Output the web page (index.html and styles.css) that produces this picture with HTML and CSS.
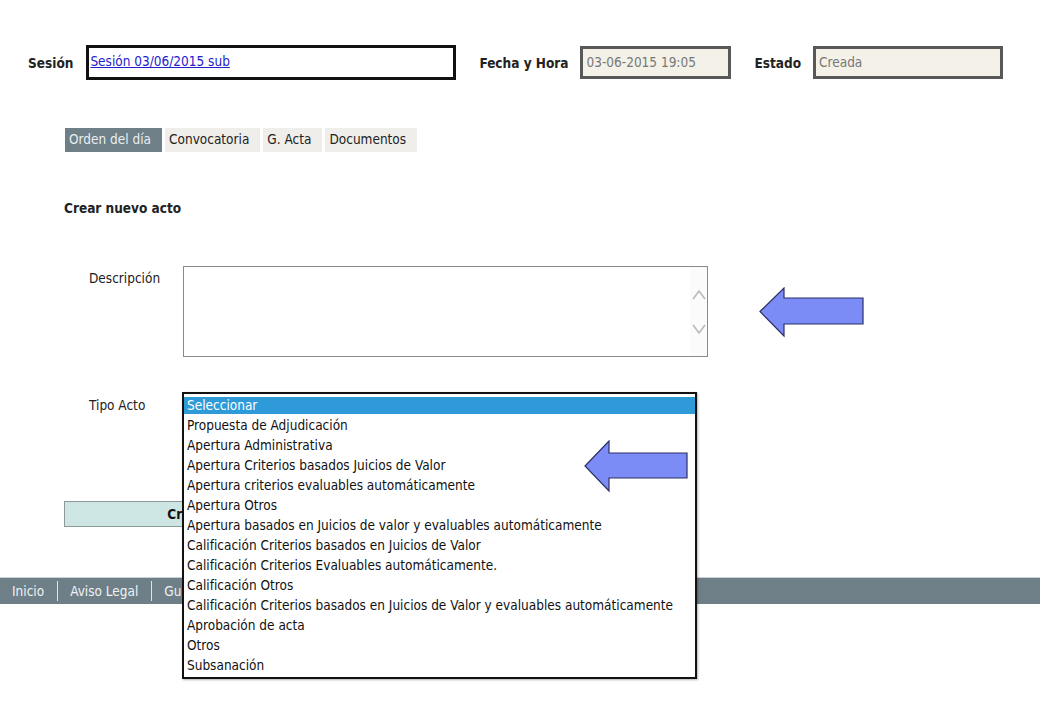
FILE: index.html
```html
<!DOCTYPE html>
<html lang="es">
<head>
    <meta charset="UTF-8">
    <title>Sesión - Orden del día</title>
    <link rel="stylesheet" href="styles.css">
</head>
<body>

    <!-- Cabecera de sesion -->
    <div class="session-row">
        <span class="label">Sesión</span>
        <div class="session-box"><a href="#sesion">Sesión 03/06/2015 sub</a></div>
        <span class="label label-fecha">Fecha y Hora</span>
        <div class="readonly fecha">03-06-2015 19:05</div>
        <span class="label label-estado">Estado</span>
        <div class="readonly estado">Creada</div>
    </div>

    <!-- Pestañas -->
    <div class="tabs">
        <a href="#orden" class="tab active">Orden del día</a>
        <a href="#convocatoria" class="tab">Convocatoria</a>
        <a href="#acta" class="tab">G. Acta</a>
        <a href="#documentos" class="tab">Documentos</a>
    </div>

    <!-- Formulario -->
    <div class="content">
        <h2>Crear nuevo acto</h2>

        <div class="form-row desc-row">
            <span class="field-label">Descripción</span>
            <div class="textarea">
                <div class="scroll">
                    <svg width="14" height="12" viewBox="0 0 14 12"><polyline points="1,10 7,2 13,10" fill="none" stroke="#b9b9b9" stroke-width="1.6"/></svg>
                    <svg width="14" height="12" viewBox="0 0 14 12"><polyline points="1,2 7,10 13,2" fill="none" stroke="#b9b9b9" stroke-width="1.6"/></svg>
                </div>
            </div>
        </div>

        <div class="form-row tipo-row">
            <span class="field-label">Tipo Acto</span>
            <div class="select-wrap">
                <ul class="listbox">
                    <li class="selected">Seleccionar</li>
                    <li>Propuesta de Adjudicación</li>
                    <li>Apertura Administrativa</li>
                    <li>Apertura Criterios basados Juicios de Valor</li>
                    <li>Apertura criterios evaluables automáticamente</li>
                    <li>Apertura Otros</li>
                    <li>Apertura basados en Juicios de valor y evaluables automáticamente</li>
                    <li>Calificación Criterios basados en Juicios de Valor</li>
                    <li>Calificación Criterios Evaluables automáticamente.</li>
                    <li>Calificación Otros</li>
                    <li>Calificación Criterios basados en Juicios de Valor y evaluables automáticamente</li>
                    <li>Aprobación de acta</li>
                    <li>Otros</li>
                    <li>Subsanación</li>
                </ul>
            </div>
        </div>

        <button class="btn-crear">Crear</button>
    </div>

    <!-- Pie -->
    <div class="footer">
        <a href="#inicio">Inicio</a>
        <a href="#aviso">Aviso Legal</a>
        <a href="#guia">Guía</a>
    </div>

    <!-- Flechas de anotacion -->
    <svg class="arrow arrow-desc" width="106" height="51" viewBox="0 0 106 51">
        <polygon points="1,24.5 25,1 25,11 104,11 104,37 25,37 25,49" fill="#7c8cf6" stroke="#2b2f66" stroke-width="1.2"/>
    </svg>
    <svg class="arrow arrow-tipo" width="106" height="53" viewBox="0 0 106 53">
        <polygon points="1,26 25,1 25,13 103,13 103,38 25,38 25,51" fill="#7c8cf6" stroke="#2b2f66" stroke-width="1.2"/>
    </svg>

</body>
</html>
```

FILE: styles.css
```css
/* General */
body {
    font-family: "DejaVu Sans Condensed", "DejaVu Sans", Verdana, sans-serif;
    font-size: 13.5px;
    color: #222;
    margin: 0;
    padding: 0;
    background: white;
    position: relative;
    min-height: 720px;
}

/* Cabecera de sesion */
.session-row {
    display: flex;
    align-items: center;
    padding: 45px 0 0 28px;
    height: 35px;
}

.label {
    font-weight: bold;
    color: #222;
}

.session-box {
    margin-left: 13px;
    width: 364px;
    height: 29px;
    border: 3px solid #111;
}

.session-box a {
    display: block;
    color: #2222cc;
    padding: 5px 0 0 1px;
}

.label-fecha {
    margin-left: 23px;
}

.label-estado {
    margin-left: 23px;
}

.readonly {
    height: 27px;
    line-height: 27px;
    border: 3px solid #585858;
    background: #f3f1e8;
    color: #777;
    padding-left: 3px;
}

.fecha {
    margin-left: 12px;
    width: 142px;
}

.estado {
    margin-left: 12px;
    width: 181px;
}

/* Pestañas */
.tabs {
    display: flex;
    gap: 3px;
    margin: 48px 0 0 65px;
}

.tab {
    display: block;
    height: 24px;
    line-height: 22px;
    padding: 0 11px 0 4px;
    background: #efeeea;
    color: #222;
    text-decoration: none;
}

.tab.active {
    background: #6e7f87;
    color: #e8eef0;
}

/* Formulario */
.content {
    padding-left: 64px;
}

.content h2 {
    font-size: 13.5px;
    font-weight: bold;
    margin: 48px 0 0 0;
    line-height: 16px;
}

.form-row {
    display: flex;
    padding-left: 25px;
}

.field-label {
    width: 94px;
    flex-shrink: 0;
}

.desc-row {
    margin-top: 50px;
}

.desc-row .field-label {
    padding-top: 4px;
}

.textarea {
    width: 523px;
    height: 89px;
    border: 1px solid #8a8a8a;
    background: white;
    display: flex;
    justify-content: flex-end;
}

.scroll {
    width: 17px;
    background: #fbfbfb;
    display: flex;
    flex-direction: column;
    justify-content: center;
    align-items: center;
    gap: 22px;
}

.tipo-row {
    margin-top: 35px;
    height: 20px;
}

.tipo-row .field-label {
    padding-top: 5px;
}

.select-wrap {
    position: relative;
    width: 515px;
    margin-left: -1px;
}

.listbox {
    position: absolute;
    top: 0;
    left: 0;
    z-index: 10;
    list-style: none;
    margin: 0;
    padding: 3px 0 0 0;
    width: 511px;
    height: 280px;
    border: 2px solid #111;
    background: white;
    box-shadow: 1px 1px 2px rgba(0, 0, 0, 0.3);
}

.listbox li {
    height: 20px;
    line-height: 20px;
    padding-left: 3px;
    color: #111;
    white-space: nowrap;
}

.listbox li.selected {
    background: #2f9ad8;
    color: white;
    height: 17px;
    line-height: 17px;
    margin-bottom: 1px;
}

.btn-crear {
    display: block;
    margin-top: 89px;
    width: 244px;
    height: 26px;
    border: 1px solid #8c9a9a;
    background: #cde6e4;
    font-family: inherit;
    font-size: 13.5px;
    font-weight: bold;
    color: #111;
}

/* Pie */
.footer {
    margin-top: 50px;
    height: 26px;
    background: #6e7f87;
    border-top: 1px solid #c9d2d6;
    display: flex;
    align-items: center;
}

.footer a {
    color: #eef2f4;
    text-decoration: none;
    padding: 0 13px 0 12px;
    border-right: 1px solid #dfe5e8;
    line-height: 20px;
}

/* Flechas de anotacion */
.arrow {
    position: absolute;
    z-index: 20;
}

.arrow-desc {
    left: 759px;
    top: 287px;
}

.arrow-tipo {
    left: 584px;
    top: 440px;
}
```
